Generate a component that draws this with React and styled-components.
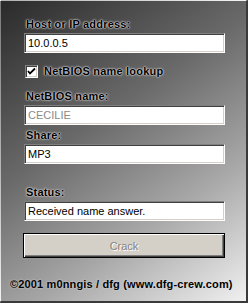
import styled, { createGlobalStyle } from 'styled-components';

const GlobalStyle = createGlobalStyle`
  html, body {
    margin: 0;
    padding: 0;
    background: #808080;
  }
  #root {
    width: 248px;
    height: 303px;
  }
`;

const Window = styled.div`
  box-sizing: border-box;
  width: 248px;
  height: 303px;
  display: flex;
  flex-direction: column;
  padding: 16px 22px 0 23px;
  background: linear-gradient(145deg, #2a2a2a 0%, #6a6a6a 40%, #a8a8a8 70%, #f0f0f0 100%);
  border-top: 1px solid rgba(255, 255, 255, 0.25);
  border-left: 1px solid rgba(255, 255, 255, 0.15);
  border-right: 2px solid #3a3a3a;
  border-bottom: 2px solid #3a3a3a;
  font-family: "Liberation Sans", Arial, sans-serif;
`;

const halo = `
  text-shadow:
    0 0 1px rgba(220, 220, 220, 1),
    0 0 1px rgba(220, 220, 220, 1),
    0 0 2px rgba(200, 200, 200, 1),
    0 0 3px rgba(190, 190, 190, 0.8);
`;

const Label = styled.div`
  font-size: 11px;
  font-weight: 700;
  line-height: 13px;
  letter-spacing: 0.2px;
  color: #000;
  padding-left: 2px;
  margin-top: ${(p) => p.$top || 0}px;
  ${halo}
`;

const Input = styled.div`
  box-sizing: border-box;
  height: 20px;
  width: 201px;
  margin-top: 2px;
  background: #fff;
  border-top: 1px solid #808080;
  border-left: 1px solid #808080;
  border-right: 1px solid #fff;
  border-bottom: 1px solid #fff;
  box-shadow: inset 1px 1px 0 #404040, inset -1px -1px 0 #d4d0c8;
  padding: 3px 0 0 3px;
  font-size: 11px;
  line-height: 13px;
  color: ${(p) => (p.$disabled ? '#8a8a8a' : '#000')};
  white-space: nowrap;
`;

const CheckRow = styled.div`
  display: flex;
  align-items: center;
  gap: 6px;
  margin-top: 12px;
  padding-left: 1px;
`;

const CheckBox = styled.span`
  box-sizing: border-box;
  width: 13px;
  height: 13px;
  background: #fff;
  border-top: 1px solid #808080;
  border-left: 1px solid #808080;
  border-right: 1px solid #fff;
  border-bottom: 1px solid #fff;
  box-shadow: inset 1px 1px 0 #404040, inset -1px -1px 0 #d4d0c8;
  display: flex;
  align-items: center;
  justify-content: center;
`;

const CheckText = styled(Label)`
  padding-left: 0;
`;

const Button = styled.div`
  box-sizing: border-box;
  width: 202px;
  height: 25px;
  margin-top: 12px;
  margin-left: -1px;
  border: 1px solid #000;
  background: #d4d0c8;
  box-shadow: inset 1px 1px 0 #fff, inset -1px -1px 0 #404040, inset -2px -2px 0 #808080;
  display: flex;
  align-items: center;
  justify-content: center;
  font-size: 11px;
  color: #86837d;
  text-shadow: 1px 1px 0 #fff;
`;

const Footer = styled.div`
  margin-top: 20px;
  margin-left: -14px;
  font-size: 11px;
  font-weight: 700;
  line-height: 13px;
  letter-spacing: 0.15px;
  color: #000;
  white-space: nowrap;
  text-shadow: 0 0 2px rgba(235, 235, 235, 0.9);
`;

const Check = () => (
  <svg width="9" height="9" viewBox="0 0 9 9">
    <path d="M1 4 L3 6.5 L8 1.5" fill="none" stroke="#000" strokeWidth="1.8" />
  </svg>
);

export default function App() {
  return (
    <>
      <GlobalStyle />
      <Window>
        <Label $top={1}>Host or IP address:</Label>
        <Input>10.0.0.5</Input>
        <CheckRow>
          <CheckBox>
            <Check />
          </CheckBox>
          <CheckText>NetBIOS name lookup</CheckText>
        </CheckRow>
        <Label $top={12}>NetBIOS name:</Label>
        <Input $disabled>CECILIE</Input>
        <Label $top={4}>Share:</Label>
        <Input>MP3</Input>
        <Label $top={22}>Status:</Label>
        <Input>Received name answer.</Input>
        <Button>Crack</Button>
        <Footer>©2001 m0nngis / dfg (www.dfg-crew.com)</Footer>
      </Window>
    </>
  );
}
